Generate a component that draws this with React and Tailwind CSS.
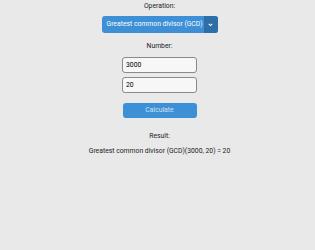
import React, { useState } from 'react';

function gcd(a, b) {
  a = Math.abs(a);
  b = Math.abs(b);
  while (b) {
    const t = b;
    b = a % b;
    a = t;
  }
  return a;
}

export default function App() {
  const [a, setA] = useState('3000');
  const [b, setB] = useState('20');
  const [result, setResult] = useState(gcd(3000, 20));

  return (
    <div
      className="min-h-[250px] w-full bg-[#e9e9e9] flex flex-col items-center pl-[4px] text-[6.8px] text-[#222]"
      style={{ fontFamily: 'Roboto, "Liberation Sans", sans-serif' }}
    >
      <p className="mt-[2px] leading-[9px]">Operation:</p>
      <div className="mt-[5px] flex h-[17px] w-[116px] rounded-[3px] overflow-hidden bg-[#3d8fd6] text-white">
        <div className="flex-1 flex items-center pl-[5px] whitespace-nowrap">Greatest common divisor (GCD)</div>
        <div className="w-[14px] bg-[#2f6fa8] flex items-center justify-center">
          <svg width="7" height="7" viewBox="0 0 10 10" fill="none">
            <path d="M2.5 4 L5 6.5 L7.5 4" stroke="white" strokeWidth="1.6" />
          </svg>
        </div>
      </div>
      <p className="mt-[9px] leading-[9px]">Number:</p>
      <input
        value={a}
        onChange={(e) => setA(e.target.value)}
        className="mt-[6px] h-[16px] w-[75px] rounded-[3px] border border-[#8a8a8a] bg-[#f7f7f7] px-[3px] text-[6.8px] text-black outline-none"
      />
      <input
        value={b}
        onChange={(e) => setB(e.target.value)}
        className="mt-[4px] h-[16px] w-[75px] rounded-[3px] border border-[#8a8a8a] bg-[#f7f7f7] px-[3px] text-[6.8px] text-black outline-none"
      />
      <button
        onClick={() => setResult(gcd(Number(a), Number(b)))}
        className="mt-[10px] h-[15px] w-[74px] rounded-[3px] bg-[#3d8fd6] text-[#cfe3f5] text-[6.8px]"
      >
        Calculate
      </button>
      <p className="mt-[14px] leading-[9px]">Result:</p>
      <p className="mt-[6px] leading-[9px]">
        Greatest common divisor (GCD)({a}, {b}) = {result}
      </p>
    </div>
  );
}
